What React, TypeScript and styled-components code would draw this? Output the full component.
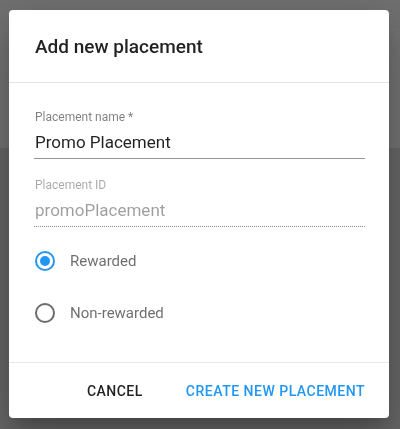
import React from "react";
import styled, { createGlobalStyle } from "styled-components";

const Global = createGlobalStyle`
  html, body { margin: 0; padding: 0; }
  body {
    width: 400px;
    height: 429px;
    overflow: hidden;
    font-family: Roboto, "Noto Sans", Arial, sans-serif;
    background: #676767;
  }
`;

const Page = styled.div`
  width: 400px;
  height: 429px;
  display: flex;
  flex-direction: column;
`;

const HeaderBand = styled.div`
  height: 148px;
  background: #737373;
  border-top: 28px solid #717171;
  box-sizing: border-box;
`;

const Rest = styled.div`
  flex: 1;
  background: #676767;
`;

const Dialog = styled.div`
  position: fixed;
  top: 10px;
  left: 9px;
  width: 380px;
  height: 408px;
  background: #fff;
  border-radius: 4px;
  box-shadow: 0 11px 15px -7px rgba(0, 0, 0, 0.2), 0 24px 38px 3px rgba(0, 0, 0, 0.14),
    0 9px 46px 8px rgba(0, 0, 0, 0.12);
  display: flex;
  flex-direction: column;
`;

const Title = styled.h2`
  margin: 0;
  padding: 21px 24px 19px 26px;
  font-size: 19px;
  line-height: 32px;
  font-weight: 500;
  color: rgba(0, 0, 0, 0.87);
  border-bottom: 1px solid #e3e3e3;
`;

const Body = styled.div`
  flex: 1;
  padding: 27px 24px 0 25px;
  display: flex;
  flex-direction: column;
  gap: 19px;
`;

const Field = styled.div`
  display: flex;
  flex-direction: column;
`;

const Label = styled.label<{ $disabled?: boolean }>`
  font-size: 12px;
  line-height: 14px;
  padding-left: 1px;
  color: ${(p) => (p.$disabled ? "rgba(0,0,0,0.34)" : "rgba(0,0,0,0.5)")};
`;

const Input = styled.div<{ $disabled?: boolean }>`
  padding: 8px 0 6px 1px;
  font-size: 17px;
  line-height: 20px;
  color: ${(p) => (p.$disabled ? "rgba(0,0,0,0.38)" : "rgba(0,0,0,0.87)")};
  border-bottom: 1px ${(p) => (p.$disabled ? "dotted rgba(0,0,0,0.45)" : "solid rgba(0,0,0,0.42)")};
`;

const RadioGroup = styled.div`
  display: flex;
  flex-direction: column;
  margin-top: -11px;
`;

const RadioRow = styled.div`
  display: flex;
  align-items: center;
  height: 52px;
  gap: 13px;
  margin-left: -1px;
`;

const RadioLabel = styled.span`
  font-size: 15px;
  color: rgba(0, 0, 0, 0.58);
`;

const Footer = styled.div`
  border-top: 1px solid #e8e8e8;
  padding: 10px 8px 9px;
  display: flex;
  justify-content: flex-end;
  gap: 11px;
`;

const Button = styled.button<{ $primary?: boolean }>`
  border: 0;
  background: transparent;
  height: 36px;
  min-width: 88px;
  padding: 0 16px;
  font-family: Roboto, Arial, sans-serif;
  font-size: 14px;
  font-weight: 500;
  letter-spacing: 0.5px;
  text-transform: uppercase;
  color: ${(p) => (p.$primary ? "#2196f3" : "rgba(0,0,0,0.87)")};
  cursor: pointer;
`;

const RadioIcon = ({ checked }: { checked?: boolean }) => (
  <svg width="24" height="24" viewBox="0 0 24 24">
    <circle
      cx="12"
      cy="12"
      r="9"
      fill="none"
      stroke={checked ? "#2196f3" : "rgba(0,0,0,0.58)"}
      strokeWidth="2"
    />
    {checked && <circle cx="12" cy="12" r="5" fill="#2196f3" />}
  </svg>
);

export default function App() {
  return (
    <>
      <Global />
      <Page>
        <HeaderBand />
        <Rest />
      </Page>
      <Dialog>
        <Title>Add new placement</Title>
        <Body>
          <Field>
            <Label>Placement name *</Label>
            <Input>Promo Placement</Input>
          </Field>
          <Field>
            <Label $disabled>Placement ID</Label>
            <Input $disabled>promoPlacement</Input>
          </Field>
          <RadioGroup>
            <RadioRow>
              <RadioIcon checked />
              <RadioLabel>Rewarded</RadioLabel>
            </RadioRow>
            <RadioRow>
              <RadioIcon />
              <RadioLabel>Non-rewarded</RadioLabel>
            </RadioRow>
          </RadioGroup>
        </Body>
        <Footer>
          <Button>Cancel</Button>
          <Button $primary>Create new placement</Button>
        </Footer>
      </Dialog>
    </>
  );
}
